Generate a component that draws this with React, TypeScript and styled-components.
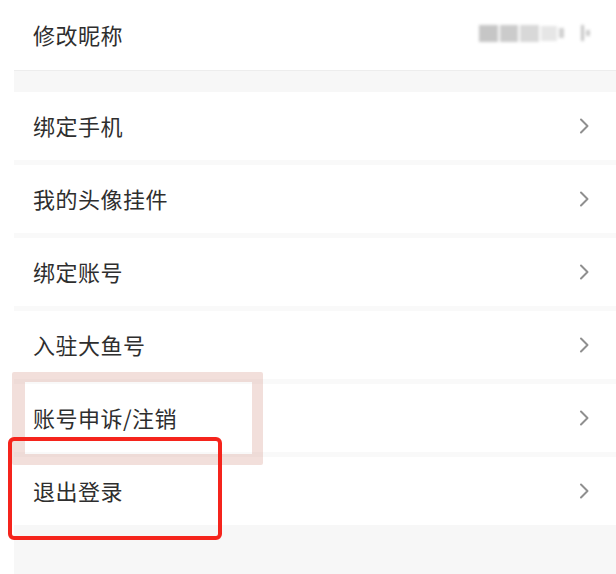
import React from "react";
import styled, { createGlobalStyle } from "styled-components";

const Global = createGlobalStyle`
  html, body { margin: 0; padding: 0; background: #ffffff; }
  body { width: 616px; height: 574px; overflow: hidden; font-family: "Noto Sans CJK SC", "Noto Sans", sans-serif; }
`;

const Page = styled.div`
  position: relative;
  width: 616px;
  height: 574px;
  background: #ffffff;
  overflow: hidden;
`;

const List = styled.div`
  margin-left: 14px;
  display: flex;
  flex-direction: column;
`;

const Row = styled.div<{ $h: number }>`
  height: ${(p) => p.$h}px;
  display: flex;
  align-items: center;
  justify-content: space-between;
  padding: 0 26px 0 19px;
  background: #ffffff;
`;

const Label = styled.span`
  font-size: 22px;
  color: #2e2e2e;
  letter-spacing: 0.5px;
  line-height: 1;
  margin-top: -3px;
`;

const GroupGap = styled.div`
  height: 21px;
  background: #f7f7f7;
  border-top: 1px solid #ededed;
`;

const Divider = styled.div`
  height: 5px;
  background: #f9f9f9;
`;

const Footer = styled.div`
  height: 49px;
  background: #f7f7f7;
`;

const Blurred = styled.div`
  display: flex;
  align-items: center;
  gap: 2px;
  filter: blur(1.5px);
  margin-top: -4px;
`;

const Blob = styled.div<{ $w: number; $h: number; $c: string; $ml?: number }>`
  width: ${(p) => p.$w}px;
  height: ${(p) => p.$h}px;
  background: ${(p) => p.$c};
  margin-left: ${(p) => p.$ml ?? 0}px;
`;

const Chevron = () => (
  <svg width="11" height="16" viewBox="0 0 11 16" fill="none">
    <path d="M2 1.5 L8.5 8 L2 14.5" stroke="#8f8f8f" strokeWidth="2" strokeLinecap="round" strokeLinejoin="round" />
  </svg>
);

const PinkMark = styled.div`
  position: absolute;
  left: 12px;
  top: 372px;
  width: 251px;
  height: 93px;
  box-sizing: border-box;
  border-style: solid;
  border-color: rgba(220, 170, 160, 0.38);
  border-width: 10px 11px 11px 13px;
  border-radius: 2px;
  pointer-events: none;
`;

const RedMark = styled.div`
  position: absolute;
  left: 8px;
  top: 437px;
  width: 214px;
  height: 103px;
  box-sizing: border-box;
  border: 4px solid #f5241c;
  border-radius: 6px;
  pointer-events: none;
`;

const items = ["绑定手机", "我的头像挂件", "绑定账号", "入驻大鱼号", "账号申诉/注销", "退出登录"];

export default function App() {
  return (
    <Page>
      <Global />
      <List>
        <Row $h={70}>
          <Label>修改昵称</Label>
          <Blurred>
            <Blob $w={19} $h={17} $c="#c6c6c6" />
            <Blob $w={18} $h={17} $c="#cbcbcb" />
            <Blob $w={19} $h={17} $c="#d8d8d8" />
            <Blob $w={16} $h={15} $c="#e6e6e6" />
            <Blob $w={5} $h={10} $c="#d0d0d0" />
            <Blob $w={3} $h={16} $c="#c4c4c4" $ml={15} />
            <Blob $w={4} $h={6} $c="#cccccc" />
          </Blurred>
        </Row>
        <GroupGap />
        {items.map((t, i) => (
          <React.Fragment key={t}>
            {i > 0 && <Divider />}
            <Row $h={68}>
              <Label>{t}</Label>
              <Chevron />
            </Row>
          </React.Fragment>
        ))}
        <Footer />
      </List>
      <PinkMark />
      <RedMark />
    </Page>
  );
}
